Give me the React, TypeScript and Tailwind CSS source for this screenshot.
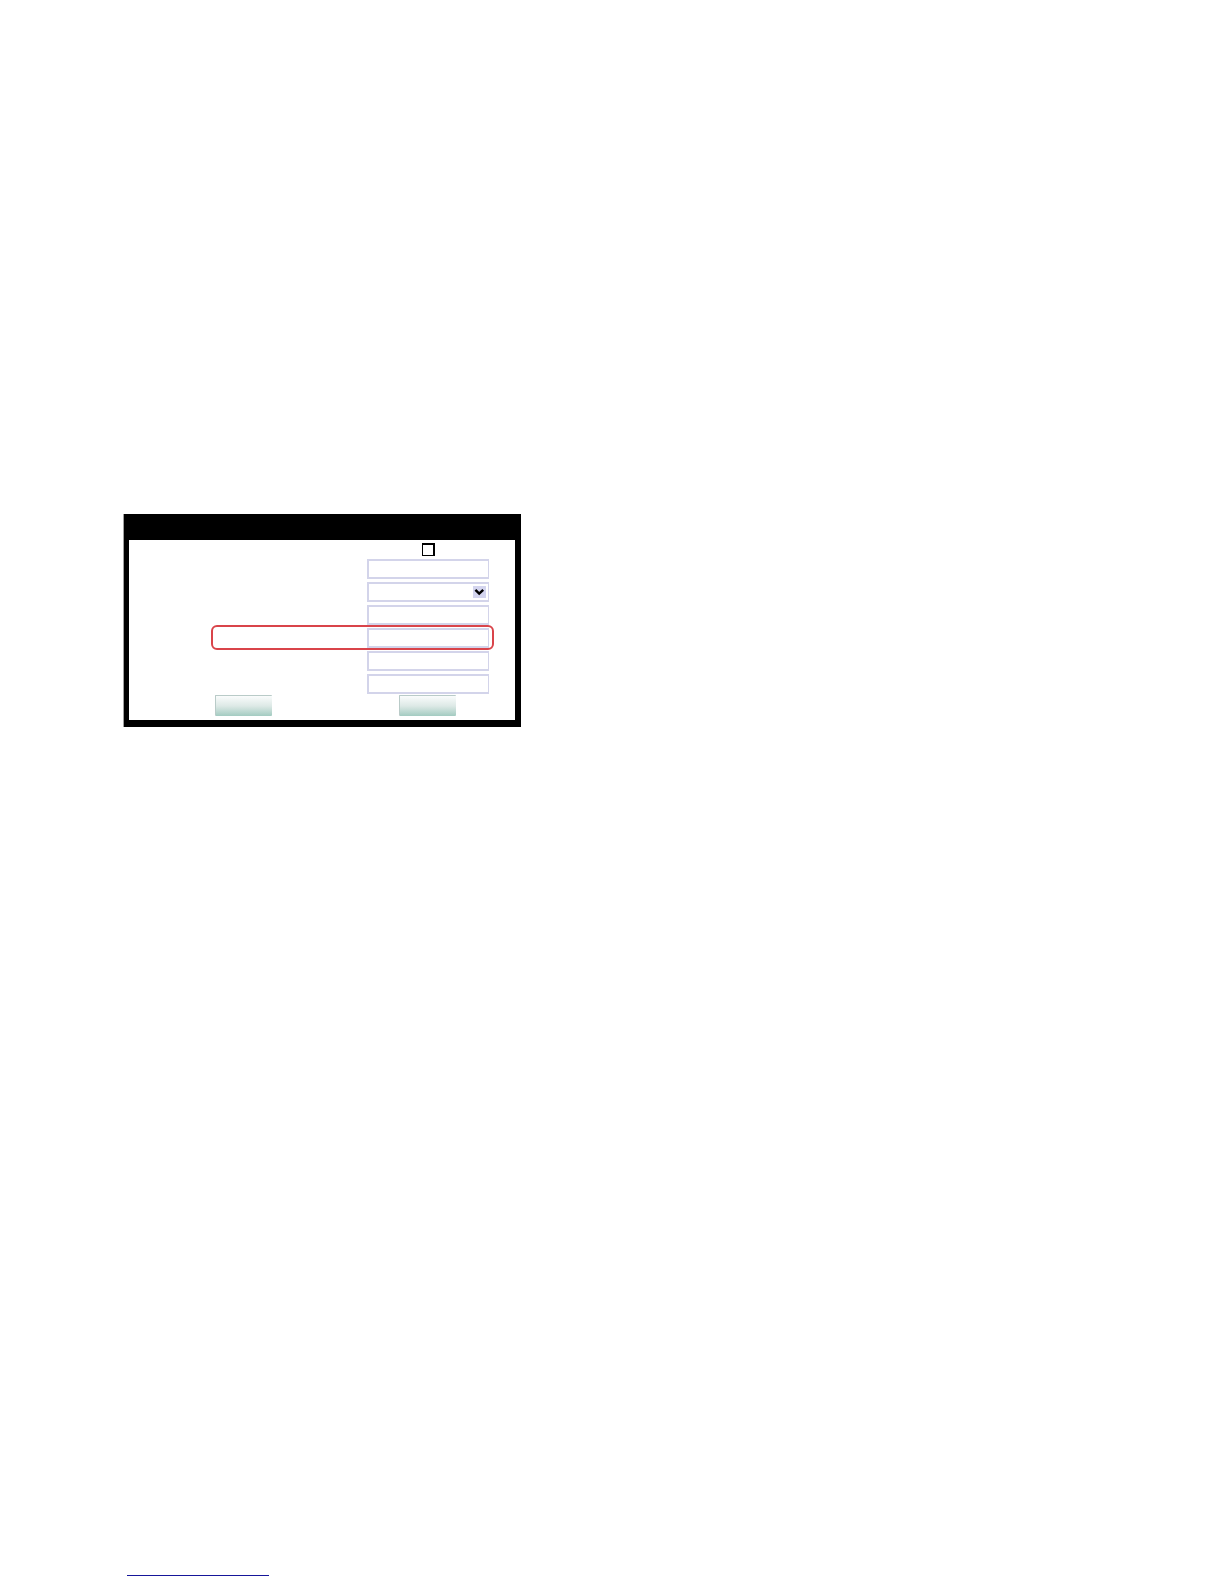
import { useState } from 'react'

type Field = {
  id: string
  label: string
  type: 'text' | 'select'
  highlight?: boolean
}

const FIELDS: Field[] = [
  { id: 'field-1', label: 'Field 1', type: 'text' },
  { id: 'field-2', label: 'Field 2', type: 'select' },
  { id: 'field-3', label: 'Field 3', type: 'text' },
  { id: 'field-4', label: 'Field 4', type: 'text', highlight: true },
  { id: 'field-5', label: 'Field 5', type: 'text' },
  { id: 'field-6', label: 'Field 6', type: 'text' },
]

export default function App() {
  const [enabled, setEnabled] = useState(false)

  return (
    <div className="flex min-h-screen flex-col bg-white font-['Liberation_Sans',Arial,sans-serif]">
      <main className="px-[123px] pt-[514px]">
        <form
          className="w-[398px] max-w-full border-l border-[#a0a0a0]"
          onSubmit={e => e.preventDefault()}
        >
          <div className="border-x-[6px] border-t-[26px] border-b-[7px] border-l-[5px] border-black pt-[3px] pb-1">
            <div className="flex justify-end pr-[26px]">
              <div className="flex w-[122px] justify-center">
                <input
                  type="checkbox"
                  aria-label="Enabled"
                  checked={enabled}
                  onChange={e => setEnabled(e.target.checked)}
                  className="block size-[13px] appearance-none border border-t-2 border-r-2 border-black bg-white checked:bg-black"
                />
              </div>
            </div>

            <div className="mt-[3px] flex flex-col gap-[3px]">
              {FIELDS.map(f => (
                <FieldRow key={f.id} field={f} />
              ))}
            </div>

            <div className="mt-px flex justify-between pr-[59px] pl-[86px]">
              <FormButton label="Submit" />
              <FormButton label="Cancel" />
            </div>
          </div>
        </form>
      </main>

      <footer className="mt-auto flex px-[127px] pb-2">
        <a href="#top" aria-label="Back to top" className="block h-5 w-[142px] border-b border-[#16169a]" />
      </footer>
    </div>
  )
}

function FieldRow({ field }: { field: Field }) {
  return (
    <div className="relative flex justify-end pr-[26px]">
      {field.type === 'select' ? (
        <div className="relative h-5 w-[122px]">
          <select
            id={field.id}
            aria-label={field.label}
            className="block h-5 w-full appearance-none border-2 border-r border-[#d3d4ea] bg-white px-1 text-xs"
          >
            <option value="" />
          </select>
          {/* Arrow box */}
          <span className="pointer-events-none absolute top-1 right-[3px] flex h-3 w-[13px] items-center justify-center bg-[#d3d4ee]">
            <svg viewBox="0 0 11 8" className="h-2 w-[11px]" fill="none" stroke="#000" strokeWidth="2.4">
              <path d="M1.4 1.8 5.2 5.6 9.2 1.8" />
            </svg>
          </span>
        </div>
      ) : (
        <input
          id={field.id}
          type="text"
          aria-label={field.label}
          className="block h-5 w-[122px] border-2 border-r border-[#d3d4ea] bg-white px-1 text-xs"
        />
      )}
      {field.highlight && (
        <span className="pointer-events-none absolute -top-[3px] right-[21px] -bottom-[2px] left-[82px] rounded-md border-2 border-[#d9444a]" />
      )}
    </div>
  )
}

function FormButton({ label }: { label: string }) {
  return (
    <button
      type="button"
      aria-label={label}
      className="h-[21px] w-[57px] rounded-[1px] border-t border-l border-[#b9cbc8] bg-linear-to-b from-[#fafcfc] via-[#dde9e6] to-[#a3cbc1]"
    />
  )
}
